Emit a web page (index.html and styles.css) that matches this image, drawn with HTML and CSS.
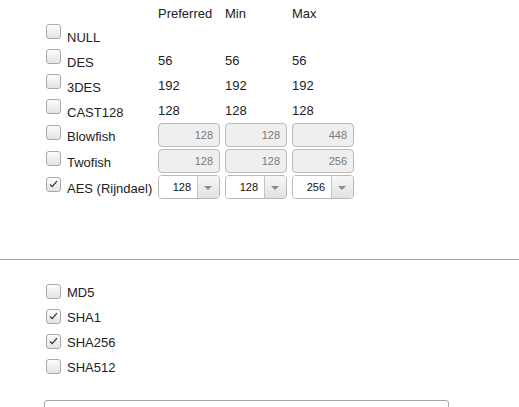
FILE: index.html
```html
<!DOCTYPE html>
<html>
<head>
<meta charset="utf-8">
<link rel="stylesheet" href="styles.css">
</head>
<body>
<div class="ciphers">
  <div class="row head">
    <span></span><span>Preferred</span><span>Min</span><span>Max</span>
  </div>
  <div class="row">
    <label class="opt"><span class="cb"></span><span class="lbl">NULL</span></label>
  </div>
  <div class="row">
    <label class="opt"><span class="cb"></span><span class="lbl">DES</span></label>
    <span class="num">56</span><span class="num">56</span><span class="num">56</span>
  </div>
  <div class="row">
    <label class="opt"><span class="cb"></span><span class="lbl">3DES</span></label>
    <span class="num">192</span><span class="num">192</span><span class="num">192</span>
  </div>
  <div class="row">
    <label class="opt"><span class="cb"></span><span class="lbl">CAST128</span></label>
    <span class="num">128</span><span class="num">128</span><span class="num">128</span>
  </div>
  <div class="row inrow">
    <label class="opt"><span class="cb"></span><span class="lbl">Blowfish</span></label>
    <span class="field dis">128</span><span class="field dis">128</span><span class="field dis">448</span>
  </div>
  <div class="row inrow">
    <label class="opt"><span class="cb"></span><span class="lbl">Twofish</span></label>
    <span class="field dis">128</span><span class="field dis">128</span><span class="field dis">256</span>
  </div>
  <div class="row inrow">
    <label class="opt"><span class="cb on"><svg viewBox="0 0 15 15"><path d="M3.5 7.5 L6 10 L11.5 3.5" fill="none" stroke="#333" stroke-width="1.4"/></svg></span><span class="lbl">AES (Rijndael)</span></label>
    <span class="sel"><span class="val">128</span><span class="arr"></span></span>
    <span class="sel"><span class="val">128</span><span class="arr"></span></span>
    <span class="sel"><span class="val">256</span><span class="arr"></span></span>
  </div>
</div>
<hr class="sep">
<div class="hashes">
  <label class="hopt"><span class="cb"></span><span>MD5</span></label>
  <label class="hopt"><span class="cb on"><svg viewBox="0 0 15 15"><path d="M3.5 7.5 L6 10 L11.5 3.5" fill="none" stroke="#333" stroke-width="1.4"/></svg></span><span>SHA1</span></label>
  <label class="hopt"><span class="cb on"><svg viewBox="0 0 15 15"><path d="M3.5 7.5 L6 10 L11.5 3.5" fill="none" stroke="#333" stroke-width="1.4"/></svg></span><span>SHA256</span></label>
  <label class="hopt"><span class="cb"></span><span>SHA512</span></label>
</div>
<div class="box"></div>
</body>
</html>
```
FILE: styles.css
```css
html, body {
  margin: 0;
  padding: 0;
  background: #fff;
  overflow: hidden;
}
body {
  font-family: "Liberation Sans", Arial, sans-serif;
  font-size: 13px;
  color: #222;
  width: 519px;
  height: 407px;
}
.ciphers {
  padding-left: 46px;
  padding-top: 6px;
}
.row {
  display: grid;
  grid-template-columns: 107px 62px 62px 62px;
  column-gap: 5px;
  height: 25px;
  align-items: start;
}
.row.head {
  height: 17px;
  line-height: 15px;
}
.row.inrow {
  height: 26px;
}
.opt {
  display: flex;
  align-items: flex-start;
  gap: 6px;
  white-space: nowrap;
}
.cb {
  flex: none;
  box-sizing: border-box;
  width: 15px;
  height: 15px;
  border: 1px solid #a9a9a9;
  border-radius: 3px;
  background: linear-gradient(#fdfdfd, #e3e3e3);
  display: inline-block;
  position: relative;
}
.cb svg {
  position: absolute;
  left: 0;
  top: 0;
  width: 13px;
  height: 13px;
}
.row .cb {
  margin-top: 1px;
}
.lbl {
  padding-top: 7px;
  line-height: 15px;
}
.num {
  padding-top: 5px;
  line-height: 15px;
}
.inrow .lbl {
  padding-top: 5px;
}
.inrow .opt {
  padding-top: 1px;
}
.field {
  box-sizing: border-box;
  height: 24px;
  border: 1px solid #b9b9b9;
  border-radius: 4px;
  font-size: 11px;
  line-height: 22px;
  text-align: right;
  padding-right: 6px;
}
.field.dis {
  background: #efefef;
  color: #7a7a7a;
}
.sel {
  box-sizing: border-box;
  height: 24px;
  border: 1px solid #b9b9b9;
  border-radius: 4px;
  display: flex;
  overflow: hidden;
  font-size: 11px;
  line-height: 22px;
  color: #111;
}
.sel .val {
  flex: 1;
  text-align: right;
  padding-right: 6px;
  background: #fff;
}
.sel .arr {
  width: 21px;
  border-left: 1px solid #c4c4c4;
  background: linear-gradient(#f7f7f7, #e2e2e2);
  position: relative;
}
.sel .arr::after {
  content: "";
  position: absolute;
  left: 6px;
  top: 10px;
  border-left: 4px solid transparent;
  border-right: 4px solid transparent;
  border-top: 4px solid #8a8a8a;
}
.sep {
  margin: 58px 0 0 0;
  border: 0;
  height: 1px;
  background: #a6a6a6;
}
.hashes {
  padding: 24px 0 0 46px;
  display: flex;
  flex-direction: column;
}
.hopt {
  display: flex;
  align-items: flex-end;
  gap: 6px;
  height: 25px;
  line-height: 15px;
}
.hopt .cb {
  margin-bottom: 10px;
}
.hopt span:last-child {
  margin-bottom: 9px;
}
.box {
  margin: 16px 0 0 44px;
  width: 405px;
  height: 30px;
  box-sizing: border-box;
  border: 1px solid #a6a6a6;
  border-radius: 3px;
}
```
